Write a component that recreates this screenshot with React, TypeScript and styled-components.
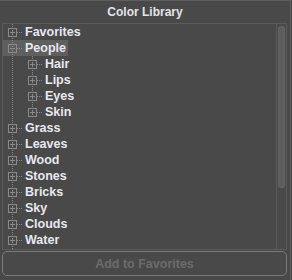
import React from "react";
import styled, { createGlobalStyle } from "styled-components";

const Global = createGlobalStyle`
  html, body { margin: 0; padding: 0; background: #494949; }
  body { font-family: "Liberation Sans", Arial, sans-serif; }
`;

const Frame = styled.div`
  width: 291px;
  height: 280px;
  box-sizing: border-box;
  border-top: 1px solid #5e5e5e;
  border-right: 1px solid #5e5e5e;
  display: flex;
  flex-direction: column;
`;

const Title = styled.div`
  height: 22px;
  line-height: 22px;
  text-align: center;
  font-size: 12px;
  font-weight: bold;
  color: #e4e4ea;
`;

const Panel = styled.div`
  margin: 0 3px 0 2px;
  height: 227px;
  box-sizing: border-box;
  border: 1px solid #5a5a5a;
  display: flex;
  overflow: hidden;
`;

const TreeArea = styled.div`
  flex: 1;
  overflow: hidden;
  display: flex;
  flex-direction: column;
`;

const Row = styled.div<{ $selected?: boolean }>`
  display: flex;
  align-items: center;
  flex: none;
  height: 16px;
  width: fit-content;
  background: ${(p) => (p.$selected ? "#5f5f5f" : "transparent")};
`;

const Label = styled.span`
  font-size: 12.5px;
  font-weight: bold;
  color: #e8e8ee;
  line-height: 16px;
  padding: 0 2px;
`;

const Filler = styled.div`
  flex: 1;
  width: 20px;
`;

const Scrollbar = styled.div`
  width: 10px;
  border-left: 1px solid #5a5a5a;
  display: flex;
  flex-direction: column;
  padding: 2px 1px 0 1px;
  box-sizing: border-box;
`;

const Thumb = styled.div`
  width: 7px;
  height: 162px;
  border-radius: 4px;
  background: #5d5d5d;
  box-shadow: inset 0 0 0 1px #646464;
`;

const Button = styled.button`
  margin: 1px 3px 0 2px;
  height: 25px;
  box-sizing: border-box;
  border: 1px solid #7a7a7a;
  border-radius: 5px;
  background: #494949;
  color: #6c6c6c;
  font-family: "Liberation Sans", Arial, sans-serif;
  font-size: 12.5px;
  font-weight: bold;
  padding: 0;
`;

const LINE = "#8a8a8a";

type ColProps = { kind: "pass" | "none" | "node"; last?: boolean; expanded?: boolean; h?: number };

const Col: React.FC<ColProps> = ({ kind, last, expanded, h = 16 }) => (
  <svg width={20} height={h} style={{ display: "block", flex: "none" }}>
    {kind === "pass" && (
      <line x1={9.5} y1={0} x2={9.5} y2={h} stroke={LINE} strokeDasharray="1 1" />
    )}
    {kind === "node" && (
      <>
        <line x1={9.5} y1={0} x2={9.5} y2={last ? 4 : 16} stroke={LINE} strokeDasharray="1 1" />
        <line x1={14} y1={8.5} x2={20} y2={8.5} stroke={LINE} strokeDasharray="1 1" />
        <rect x={5.5} y={4.5} width={8} height={8} fill="none" stroke={LINE} />
        <line x1={7} y1={8.5} x2={12} y2={8.5} stroke={LINE} />
        {!expanded && <line x1={9.5} y1={6} x2={9.5} y2={11} stroke={LINE} />}
      </>
    )}
  </svg>
);

type Item = { label: string; level: number; expanded?: boolean; selected?: boolean; last?: boolean };

const items: Item[] = [
  { label: "Favorites", level: 0 },
  { label: "People", level: 0, expanded: true, selected: true },
  { label: "Hair", level: 1 },
  { label: "Lips", level: 1 },
  { label: "Eyes", level: 1 },
  { label: "Skin", level: 1, last: true },
  { label: "Grass", level: 0 },
  { label: "Leaves", level: 0 },
  { label: "Wood", level: 0 },
  { label: "Stones", level: 0 },
  { label: "Bricks", level: 0 },
  { label: "Sky", level: 0 },
  { label: "Clouds", level: 0 },
  { label: "Water", level: 0 },
];

export default function App() {
  return (
    <>
      <Global />
      <Frame>
        <Title>Color Library</Title>
        <Panel>
          <TreeArea>
            {items.map((it) => (
              <Row key={it.label} $selected={it.selected}>
                {it.level === 1 && <Col kind="pass" />}
                <Col kind="node" last={it.last} expanded={it.expanded} />
                <Label>{it.label}</Label>
              </Row>
            ))}
            <Filler>
              <Col kind="pass" h={8} />
            </Filler>
          </TreeArea>
          <Scrollbar>
            <Thumb />
          </Scrollbar>
        </Panel>
        <Button disabled>Add to Favorites</Button>
      </Frame>
    </>
  );
}
